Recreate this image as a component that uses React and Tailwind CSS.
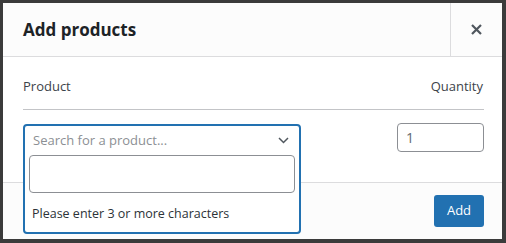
import React from "react";

export default function App() {
  const font = { fontFamily: '"Open Sans", "Noto Sans", sans-serif' };

  return (
    <div
      className="w-[506px] h-[243px] bg-[#3b3b3b] pl-[3px] pt-[3px] pr-[4px] pb-[4px]"
      style={font}
    >
      <div className="w-[499px] h-[236px] bg-white flex flex-col">
        {/* header */}
        <div className="h-[54px] shrink-0 flex bg-[#fcfcfc] border-b border-[#dcdcde]">
          <h1 className="flex-1 pl-[20px] flex items-center text-[17px] font-bold text-[#1d2327]">
            Add products
          </h1>
          <button className="w-[52px] border-l border-[#dcdcde] flex items-center justify-center text-[#50575e]">
            <svg width="11" height="11" viewBox="0 0 11 11">
              <path d="M1 1L10 10M10 1L1 10" stroke="currentColor" strokeWidth="2.2" />
            </svg>
          </button>
        </div>

        {/* body */}
        <div className="flex-1 pl-[20px] pr-[18px]">
          <div className="flex justify-between pt-[20px] pb-[14px] border-b border-[#c3c4c7] text-[13px] leading-[18px] text-[#3c434a]">
            <span>Product</span>
            <span className="pr-[1px]">Quantity</span>
          </div>
          <div className="flex justify-between pt-[14px]">
            <div className="relative w-[278px] h-[29px]">
              <div className="absolute left-0 top-0 z-10 w-[278px] h-[110px] bg-white border-2 border-[#2271b1] rounded-[4px] px-[4px] flex flex-col">
                <div className="h-[29px] flex items-center justify-between pl-[4px] pr-[6px] text-[13px] text-[#8c8f94]">
                  <span>Search for a product...</span>
                  <svg width="11" height="7" viewBox="0 0 11 7">
                    <path d="M1 1L5.5 5.5L10 1" stroke="#50575e" strokeWidth="1.5" fill="none" />
                  </svg>
                </div>
                <div className="h-[38px] border border-[#8c8f94] rounded-[4px] bg-white" />
                <div className="flex-1 flex items-center pl-[3px] pt-[4px] text-[12.5px] text-[#2c3338]">
                  Please enter 3 or more characters
                </div>
              </div>
            </div>
            <div className="w-[87px] h-[29px] -mt-[1px] border border-[#8c8f94] rounded-[4px] flex items-center pl-[8px] text-[14px] text-[#646970]">
              1
            </div>
          </div>
        </div>

        {/* footer */}
        <div className="h-[57px] shrink-0 bg-[#fcfcfc] border-t border-[#dcdcde] flex items-center justify-end pr-[18px]">
          <button className="w-[50px] h-[32px] bg-[#2271b1] text-white text-[13px] rounded-[3px]">
            Add
          </button>
        </div>
      </div>
    </div>
  );
}
